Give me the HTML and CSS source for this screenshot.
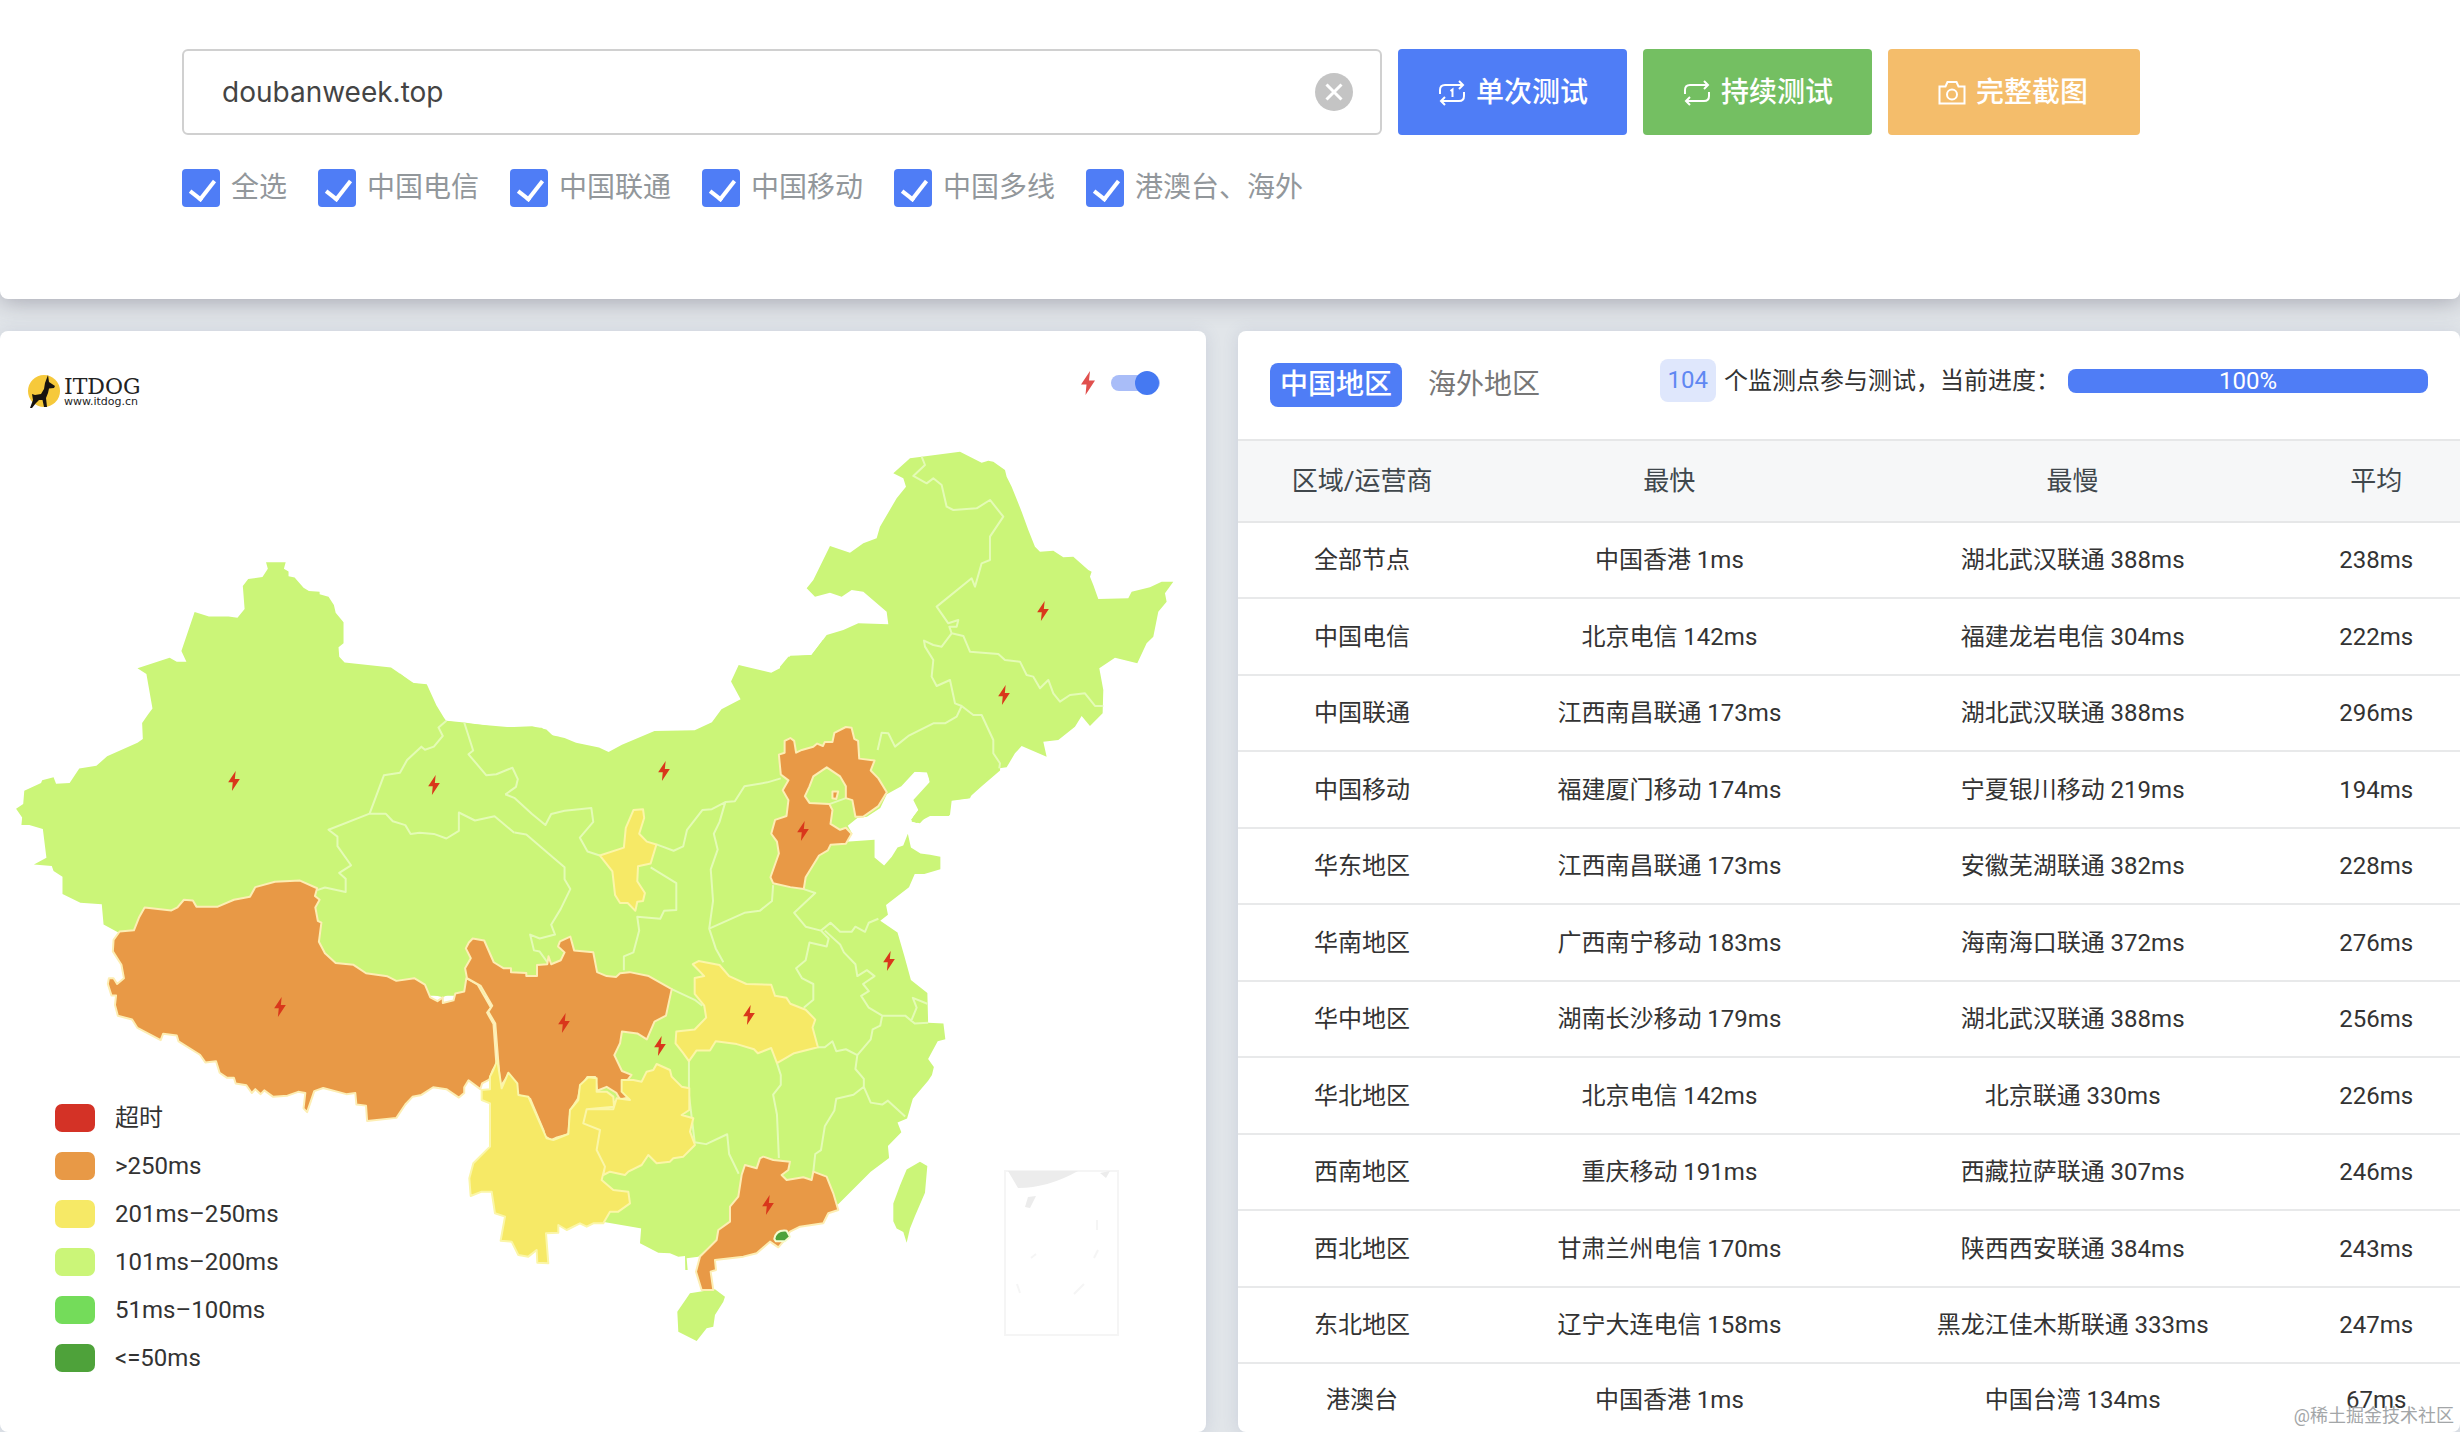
FILE: index.html
```html
<!DOCTYPE html>
<html lang="zh-CN">
<head>
<meta charset="utf-8">
<title>ITDOG 网站测速</title>
<link rel="stylesheet" href="styles.css">
</head>
<body>
<svg class="defs" aria-hidden="true">
  <symbol id="bolt" viewBox="0 0 14 24"><path d="M9 0 0 13.500H5.500L4.500 24 14 9.500H8Z"/></symbol>
</svg>
<section class="search-card">
  <form class="search-row">
    <div class="field">
      <input class="url" type="text" value="doubanweek.top" aria-label="网址">
      <button class="clear" type="button" aria-label="清除">
        <svg viewBox="0 0 38 38"><circle cx="19" cy="19" r="19"/><path d="M11.500 11.500 26.500 26.500M26.500 11.500 11.500 26.500"/></svg>
      </button>
    </div>
    <button class="btn btn-blue" type="button">
      <svg class="ico" viewBox="0 0 28 28"><path d="M2 15V11Q2 6 7 6H25M21 2 25 6 21 10M26 13V17Q26 22 21 22H3M7 18 3 22 7 26M12.500 12 14.500 10.500V18"/></svg>单次测试</button>
    <button class="btn btn-green" type="button">
      <svg class="ico" viewBox="0 0 28 28"><path d="M2 15V11Q2 6 7 6H25M21 2 25 6 21 10M26 13V17Q26 22 21 22H3M7 18 3 22 7 26"/></svg>持续测试</button>
    <button class="btn btn-orange" type="button">
      <svg class="ico" viewBox="0 0 28 28"><path d="M1.500 7.500H7.500L9.500 3H18.500L20.500 7.500H26.500V24.500H1.500Z"/><circle cx="14" cy="15.500" r="5"/></svg>完整截图</button>
  </form>
  <div class="checks">
    <label><input type="checkbox" checked>全选</label>
    <label><input type="checkbox" checked>中国电信</label>
    <label><input type="checkbox" checked>中国联通</label>
    <label><input type="checkbox" checked>中国移动</label>
    <label><input type="checkbox" checked>中国多线</label>
    <label><input type="checkbox" checked>港澳台、海外</label>
  </div>
</section>

<main class="panels">
<section class="panel map-panel">
  <svg class="map" viewBox="0 331 1206 1099" role="img" aria-label="中国各省延迟地图">
    <!-- mainland base and islands -->
    <g class="land">
      <path transform="translate(0 540) scale(.3571 .3827)" d="M745 58L800 58 795 75 808 82 808 95 825 98 850 125 865 133 895 135 895 142 920 148 935 170 940 190 962 215 962 270 948 280 950 305 965 320 1095 333 1160 375 1192 378 1200 400 1220 445 1250 472 1300 477 1400 490 1490 487 1530 495 1550 513 1568 515 1568 1100 1275 1180 1240 1195 900 1120 700 1000 330 1025 290 1005 285 952 225 948 175 925 175 880 150 865 145 852 95 848 130 830 120 755 82 745 60 745 62 725 45 702 65 690 68 655 115 635 118 628 150 620 157 637 195 635 222 597 270 590 300 565 385 530 400 520 398 478 415 455 427 440 410 350 385 335 475 308 495 318 522 318 508 290 545 188 585 200 640 200 665 203 685 180 680 120 695 102 735 97 750 75Z"/>
      <path transform="translate(400 640) scale(.3827 .3954)" d="M0 85L30 108 70 112 95 165 120 205 160 210 280 220 370 222 395 240 430 248 460 260 520 272 545 283 580 265 665 230 770 228 815 208 840 175 890 150 865 105 885 63 970 83 1005 65 1020 40 1075 38 1105 0 1568 0 1568 330 1520 370 1485 400 1440 405 1435 445 1385 445 1350 463 1335 455 1355 430 1350 400 1385 365 1380 335 1345 333 1310 370 1272 390 1255 425 1220 447 1195 450 1170 470 1182 490 1165 510 1240 505 1240 550 1265 570 1285 548 1300 525 1315 520 1327 490 1335 525 1360 540 1385 543 1412 548 1412 580 1370 592 1345 592 1330 625 1270 670 1275 695 1255 710 1300 740 1318 800 1335 860 1378 893 1380 968 1420 970 1425 1010 1405 1015 1380 1060 1395 1080 1390 1100 1380 1115 1340 1160 1325 1210 1300 1220 1310 1245 1275 1280 1278 1310 1230 1345 1145 1427 1000 1450 880 1520 700 1500 400 1450 400 900 0 900Z"/>
      <path transform="translate(780 430) scale(.3333)" d="M425 80L540 65 605 98 625 92 640 95 675 120 680 140 695 170 725 245 745 300 765 350 780 365 820 362 850 382 880 380 925 420 935 425 930 440 940 465 955 507 1045 505 1055 485 1110 472 1145 455 1180 455 1155 490 1160 515 1135 545 1120 620 1100 640 1072 700 1005 683 958 715 970 780 968 850 930 888 905 858 885 890 835 930 790 935 800 980 725 948 705 970 680 1012 658 1015 585 1070 570 1105 515 1112 510 1155 440 1158 420 1180 395 1175 400 1160 415 1140 400 1110 450 1055 440 1025 395 1025 355 1065 322 1090 240 985 0 940 0 710 25 680 95 675 140 615 190 600 235 580 325 583 320 545 250 485 215 480 185 500 150 488 105 500 80 475 100 450 150 348 210 368 250 340 290 325 300 290 350 205 378 170 370 145 340 130 390 85Z"/>
      <path transform="translate(440 1060) scale(.3333)" d="M485 355L515 335 560 350 700 290 770 260 850 225 900 340 870 480 830 540 775 590 740 595 743 630 736 630 735 588 715 590 690 580 655 578 600 550 605 485 540 475 570 430 565 395 520 390ZM750 700L825 688 855 710 850 725 825 765 820 800 800 805 770 843 715 815 712 755Z"/>
      <path transform="translate(740 800) scale(.3333 .357)" d="M540 1013L562 1025 555 1100 525 1165 510 1200 500 1240 490 1210 470 1200 460 1180 460 1130 480 1080 500 1035Z"/>
    </g>
    <!-- borders between provinces of the same colour -->
    <g class="border">
      <path transform="translate(0 540) scale(.3571 .3827)" d="M1250 472L1228 490 1240 512 1215 540 1190 548 1180 540 1140 575 1120 608 1075 615 1035 715 920 757 945 775 945 800 983 850 950 870 968 885 968 920 910 908 888 915M1035 715L1080 715 1100 735 1135 745 1150 768 1175 765 1215 768 1250 780 1285 760 1285 712 1330 733 1385 722 1440 765M1300 477L1325 550 1312 560 1362 615 1390 612 1435 595 1450 625 1445 645 1415 665"/>
      <path transform="translate(400 640) scale(.3827 .3954)" d="M299 487L330 492 400 550 430 575 430 605 445 630 420 680 395 720 405 745 365 755 340 745 350 785 365 788 385 815M275 390L300 400 345 440 380 468 395 440 430 432 500 425 505 460 470 500 490 535 522 545M670 517L715 533 740 522 750 480 790 430 815 428 850 410 875 408 900 370 960 360 995 350M850 410L835 460 820 490 830 530 812 580 818 660 808 730 825 780 845 815M808 730L900 690 940 685 972 660 975 620M655 575L722 615 722 683 690 685 680 705 620 700 625 735 610 790 585 800 585 835M1055 630L1085 640 1030 690 1060 725 1100 735 1125 715 1150 738 1180 738 1190 725 1215 738 1225 715 1250 705M1110 735L1150 770 1160 790 1190 820 1195 850 1220 835 1240 850 1210 870 1225 888 1205 900 1225 930 1260 950 1320 950 1345 970 1380 968M1335 965L1350 930 1340 905 1378 920M1100 735L1120 755 1115 775 1070 765 1060 810 1035 830 1050 855 1080 870 1080 910 1055 930M1092 1030L1110 1030 1130 1015 1140 1040 1165 1035 1195 1050 1230 1010 1235 985 1255 975 1260 950M1195 1050L1190 1085 1212 1110 1212 1130 1230 1170 1260 1175 1275 1165 1320 1205M1212 1130L1185 1150 1140 1160 1135 1190 1110 1230 1100 1290 1085 1300 1080 1345M985 1070L995 1100 995 1125 975 1150 985 1200 990 1310M755 1065L755 1150 770 1270 800 1275 855 1250 860 1300 885 1350M710 883L770 910 790 925M1165 400L1122 415"/>
      <path transform="translate(780 430) scale(.3333)" d="M425 80L435 105 400 138 440 160 460 145 485 165 500 230 520 240 590 235 630 210 670 260 630 320 630 390 605 400 585 470 575 445 470 530 505 580 535 570 530 590 508 590 515 610 550 618 570 665 655 672 675 690 720 695 740 735 760 740 780 775 805 750 820 790 840 815 870 795 915 790 945 828 970 828M515 610L485 650 460 645 432 632 435 650 460 690 455 740 470 768 510 750 525 820 545 828 580 855 605 855 640 930 640 970 660 1000 658 1015M545 828L530 860 495 880 460 880 385 918 345 950 325 910 305 908 293 960"/>
    </g>
    <!-- provinces above 250 ms -->
    <g class="slow">
      <path transform="translate(0 540) scale(.3571 .3827)" d="M405 960L480 968 497 960 515 940 540 942 550 958 610 958 655 940 700 932 715 907 770 893 840 890 888 910 882 930 895 940 883 960 890 995 900 1000 893 1050 910 1080 940 1105 990 1110 1025 1132 1085 1140 1110 1152 1160 1145 1190 1162 1205 1195 1225 1205 1240 1195 1240 1210 1270 1203 1275 1185 1300 1180 1306 1145 1338 1162 1375 1222 1364 1235 1382 1265 1390 1370 1380 1385 1370 1410 1350 1420 1345 1435 1312 1412 1300 1430 1300 1445 1285 1457 1250 1435 1213 1430 1180 1450 1155 1455 1135 1475 1110 1510 1028 1518 1025 1478 998 1475 995 1445 970 1448 905 1432 880 1440 860 1495 850 1485 855 1445 835 1442 805 1452 765 1455 740 1438 730 1448 715 1435 705 1445 690 1425 660 1420 655 1405 635 1405 615 1392 605 1362 575 1365 560 1345 500 1310 495 1295 457 1290 450 1307 385 1275 370 1253 330 1243 322 1215 325 1190 312 1190 302 1160 305 1145 318 1145 328 1160 347 1145 340 1110 316 1075 318 1045 335 1023 375 1020 390 985Z"/>
      <path transform="translate(400 640) scale(.3827 .3954)" d="M175 855L170 830 185 805 172 780 180 765 190 755 220 760 245 815 270 830 290 830 290 840 330 842 330 850 358 850 358 822 385 820 388 800 395 820 420 810 430 790 413 775 418 762 445 750 455 785 505 790 515 840 540 850 565 852 575 843 600 840 650 850 710 883 695 950 665 965 645 1010 620 995 580 990 575 1020 560 1050 580 1090 605 1100 585 1125 605 1155 575 1162 565 1145 540 1130 515 1140 510 1105 490 1105 470 1135 465 1160 445 1190 440 1250 410 1258 395 1265 378 1255 375 1240 340 1160 305 1150 285 1098 262 1130 249 970 231 940 241 925 211 875ZM1020 248L1030 255 1035 285 1050 278 1080 270 1090 262 1105 268 1110 258 1130 258 1135 235 1165 220 1180 222 1187 250 1197 255 1200 300 1240 305 1230 330 1250 350 1272 385 1250 420 1210 447 1190 447 1182 405 1165 400 1165 370 1150 345 1115 322 1080 345 1070 370 1058 395 1070 412 1122 415 1130 430 1125 465 1150 480 1165 475 1180 490 1165 515 1125 518 1118 532 1095 545 1060 600 1055 630 1020 625 975 615 968 600 990 540 985 510 970 490 980 455 1010 445 1015 405 1000 380 1015 355 995 340 990 290 1005 285 1005 255ZM1130 383H1145L1140 402 1130 400Z"/>
      <path transform="translate(440 1060) scale(.3333)" d="M970 290L1000 300 1050 305 1045 330 1025 345 1040 360 1090 352 1115 360 1120 335 1160 350 1180 400 1195 450 1165 460 1150 490 1080 500 1050 515 1030 545 1015 562 990 545 950 580 910 590 825 600 828 630 812 635 820 690 785 690 768 635 780 590 830 540 835 510 870 485 870 440 895 410 905 345 915 315 950 325 960 295Z"/>
    </g>
    <!-- 201 to 250 ms -->
    <g class="mid">
      <path transform="translate(440 1060) scale(.3333)" d="M160 30L172 0 185 85 205 38 232 70 235 105 265 110 320 235 340 240 385 222 390 150 415 120 420 75 445 52 470 55 470 95 500 95 520 110 522 140 440 148 430 190 480 210 470 270 495 320 485 360 520 390 565 395 570 430 535 455 510 455 490 490 460 490 440 500 420 490 380 510 355 495 355 518 318 520 325 610 292 608 290 570 265 590 235 585 215 545 182 542 195 470 165 460 155 395 125 395 92 408 88 355 100 310 150 260 150 130 125 120 125 90 150 88 150 50ZM440 148L520 148 530 115 570 120 545 95 545 60 580 60 605 65 620 35 640 30 650 12 690 30 695 50 725 80 748 85 748 150 725 165 760 175 750 215 765 255 730 290 700 295 690 305 650 310 625 285 605 315 565 335 555 345 510 335 490 345 495 320 470 270 480 210 430 190Z"/>
      <path transform="translate(400 640) scale(.3827 .3954)" d="M765 820L780 812 835 822 860 850 905 870 970 872 980 900 1010 905 1020 920 1060 935 1085 960 1078 980 1092 1030 1030 1045 985 1070 970 1032 935 1045 925 1035 880 1022 825 1015 810 1038 775 1038 755 1065 740 1045 720 1020 722 990 770 985 800 955 795 925 770 895 770 855 795 850ZM522 545L585 525 590 475 610 430 635 428 638 450 625 490 645 510 670 517 655 565 622 572 620 610 640 640 635 660 620 662 615 685 595 665 575 665 562 645 555 585Z"/>
    </g>
    <path class="fast" transform="translate(440 1060) scale(.3333)" d="M1003 537Q1008 508 1040 512L1050 530 1035 544 1008 544Z"/>
    <!-- South China Sea inset -->
    <rect class="inset" x="1005" y="1171" width="113" height="164"/>
    <path class="inset-fill" d="M1008 1171H1078Q1048 1188 1018 1188ZM1028 1197 1036 1196 1030 1208 1025 1207ZM1100 1173 1110 1171 1106 1178Z"/>
    <path class="inset" d="M1097 1220V1230M1098 1250 1094 1258M1017 1284 1020 1293M1084 1284 1074 1294M1031 1258 1036 1254"/>
    <g class="bolts">
      <use href="#bolt" x="1037" y="601" width="12" height="20"/>
      <use href="#bolt" x="998" y="685" width="12" height="20"/>
      <use href="#bolt" x="658" y="761" width="12" height="20"/>
      <use href="#bolt" x="428" y="775" width="12" height="20"/>
      <use href="#bolt" x="228" y="771" width="12" height="20"/>
      <use href="#bolt" x="274" y="997" width="12" height="20"/>
      <use href="#bolt" x="558" y="1013" width="12" height="20"/>
      <use href="#bolt" x="654" y="1036" width="12" height="20"/>
      <use href="#bolt" x="743" y="1005" width="12" height="20"/>
      <use href="#bolt" x="797" y="821" width="12" height="20"/>
      <use href="#bolt" x="883" y="951" width="12" height="20"/>
      <use href="#bolt" x="762" y="1195" width="12" height="20"/>
    </g>
  </svg>
  <header class="map-head">
    <div class="logo">
      <svg viewBox="0 0 34 34"><circle cx="16" cy="17" r="16" fill="#f6c93b"/><path fill="#17130f" d="M20 1 21 8 27 12 26 14 21 14.500 20 19 18 24 19 33H16L14.500 26 11 26 8 29 4 34H2L5 26 4 20 7 21 13 20 16 15 17 9Z"/></svg>
      <div class="logo-text"><b>ITDOG</b><small>www.itdog.cn</small></div>
    </div>
    <label class="switch"><svg><use href="#bolt"/></svg><input type="checkbox" role="switch" aria-label="闪烁" checked></label>
  </header>
  <ul class="legend">
    <li><i class="c1"></i>超时</li>
    <li><i class="c2"></i>&gt;250ms</li>
    <li><i class="c3"></i>201ms–250ms</li>
    <li><i class="c4"></i>101ms–200ms</li>
    <li><i class="c5"></i>51ms–100ms</li>
    <li><i class="c6"></i>&lt;=50ms</li>
  </ul>
</section>

<section class="panel data-panel">
  <header class="data-head">
    <nav class="tabs"><button class="tab on" type="button">中国地区</button><button class="tab" type="button">海外地区</button></nav>
    <div class="status"><span class="count">104</span><span>个监测点参与测试，当前进度：</span><div class="bar" role="progressbar" aria-label="进度" aria-valuenow="100">100%</div></div>
  </header>
  <table>
    <colgroup><col class="w1"><col class="w2"><col class="w3"><col class="w4"></colgroup>
    <thead><tr><th>区域/运营商</th><th>最快</th><th>最慢</th><th>平均</th></tr></thead>
    <tbody>
      <tr><td>全部节点</td><td>中国香港 1ms</td><td>湖北武汉联通 388ms</td><td>238ms</td></tr>
      <tr><td>中国电信</td><td>北京电信 142ms</td><td>福建龙岩电信 304ms</td><td>222ms</td></tr>
      <tr><td>中国联通</td><td>江西南昌联通 173ms</td><td>湖北武汉联通 388ms</td><td>296ms</td></tr>
      <tr><td>中国移动</td><td>福建厦门移动 174ms</td><td>宁夏银川移动 219ms</td><td>194ms</td></tr>
      <tr><td>华东地区</td><td>江西南昌联通 173ms</td><td>安徽芜湖联通 382ms</td><td>228ms</td></tr>
      <tr><td>华南地区</td><td>广西南宁移动 183ms</td><td>海南海口联通 372ms</td><td>276ms</td></tr>
      <tr><td>华中地区</td><td>湖南长沙移动 179ms</td><td>湖北武汉联通 388ms</td><td>256ms</td></tr>
      <tr><td>华北地区</td><td>北京电信 142ms</td><td>北京联通 330ms</td><td>226ms</td></tr>
      <tr><td>西南地区</td><td>重庆移动 191ms</td><td>西藏拉萨联通 307ms</td><td>246ms</td></tr>
      <tr><td>西北地区</td><td>甘肃兰州电信 170ms</td><td>陕西西安联通 384ms</td><td>243ms</td></tr>
      <tr><td>东北地区</td><td>辽宁大连电信 158ms</td><td>黑龙江佳木斯联通 333ms</td><td>247ms</td></tr>
      <tr><td>港澳台</td><td>中国香港 1ms</td><td>中国台湾 134ms</td><td>67ms</td></tr>
    </tbody>
  </table>
</section>
</main>
<div class="watermark">@稀土掘金技术社区</div>
</body>
</html>
```
FILE: styles.css
```css
* { box-sizing: border-box; }
body {
  position: relative;
  margin: 0;
  min-height: 100vh;
  background: #e1e5e9;
  color: #333;
  font: 24px/36px Roboto, "Noto Sans CJK SC", sans-serif;
}
button, input { font: inherit; margin: 0; }
button { border: 0; padding: 0; cursor: pointer; }
.defs { display: none; }

.search-card {
  background: #fff;
  border-radius: 0 0 8px 8px;
  padding: 49px 182px 92px;
  box-shadow: 0 2px 24px rgba(70, 65, 85, .4);
}
.search-row { display: flex; gap: 16px; }
.field { position: relative; flex: 0 1 1200px; }
.url {
  width: 100%;
  height: 86px;
  padding: 0 90px 0 38px;
  border: 2px solid #d0d0d0;
  border-radius: 6px;
  background: #fff;
  color: #444;
  font-family: Inter, "Noto Sans CJK SC", sans-serif;
  font-size: 28px;
  outline: 0;
}
.clear {
  position: absolute;
  right: 29px;
  top: 24px;
  width: 38px;
  height: 38px;
  background: none;
}
.clear svg { display: block; }
.clear circle { fill: #c4c4c4; }
.clear path { stroke: #fff; stroke-width: 3; }
.btn {
  display: flex;
  align-items: center;
  gap: 10px;
  height: 86px;
  padding: 2px 39px 0 40px;
  border-radius: 4px;
  color: #fff;
  font-size: 28px;
  font-weight: 500;
  white-space: nowrap;
}
.btn-blue { background: #4f7df6; }
.btn-green { background: #74bf62; }
.btn-orange { background: #f4bd6b; padding: 2px 52px 0 50px; }
.ico { width: 28px; height: 28px; fill: none; stroke: #fff; stroke-width: 2; }
.checks { display: flex; gap: 31px; margin-top: 34px; }
.checks label {
  display: flex;
  align-items: center;
  gap: 11px;
  height: 38px;
  color: #92979b;
  font-size: 28px;
  line-height: 40px;
}
.checks input {
  appearance: none;
  width: 38px;
  height: 38px;
  border-radius: 4px;
  background: #4f7df6;
}
.checks input::after {
  content: "";
  display: block;
  width: 11px;
  height: 21px;
  margin: 6px 0 0 13px;
  border: solid #fff;
  border-width: 0 4px 4px 0;
  transform: rotate(38deg);
}

.panels {
  display: grid;
  grid-template-columns: 1206fr 1222fr;
  gap: 32px;
  margin-top: 32px;
}
.panel {
  background: #fff;
  border-radius: 8px;
  box-shadow: 0 1px 16px rgba(90, 100, 150, .16);
}
.map-panel { display: grid; }
.map-panel > * { grid-area: 1 / 1; }
.map { display: block; width: 100%; align-self: start; }
.map path { vector-effect: non-scaling-stroke; stroke-linejoin: round; }
.land { fill: #cbf578; }
.border { fill: none; stroke: #e4fbb6; stroke-width: 2; }
.slow { fill: #e89946; stroke: #fdeeb4; stroke-width: 2; }
.mid { fill: #f6e966; stroke: #fbf6a8; stroke-width: 2; }
.fast { fill: #4ea23a; stroke: #f6fbd0; stroke-width: 2; }
.inset { fill: none; stroke: #f5f5f5; stroke-width: 2; }
.inset-fill { fill: #ececec; }
.bolts { fill: #d9371b; }

.map-head {
  display: flex;
  justify-content: space-between;
  align-self: start;
  padding: 38px 46px 0 28px;
}
.logo { display: flex; align-items: center; gap: 2px; margin-top: 4px; }
.logo svg { width: 34px; height: 36px; }
.logo-text { padding-top: 2px; color: #222; }
.logo b { display: block; font: 22px/20px "DejaVu Serif", serif; }
.logo small { display: block; font: 11px/10px "DejaVu Sans", sans-serif; }
.switch { display: flex; align-items: center; gap: 16px; height: 28px; }
.switch svg { width: 14px; height: 26px; fill: #e0504e; }
.switch input {
  appearance: none;
  width: 49px;
  height: 16px;
  border-radius: 8px;
  background: #a9bdf8;
}
.switch input::after {
  content: "";
  display: block;
  width: 24px;
  height: 24px;
  margin: -4px 0 0 24px;
  border-radius: 50%;
  background: #4579f2;
}
.legend {
  align-self: end;
  justify-self: start;
  display: grid;
  gap: 12px;
  margin: 0;
  padding: 0 0 56px 55px;
  list-style: none;
}
.legend li { display: flex; align-items: center; gap: 20px; }
.legend i { width: 40px; height: 28px; border-radius: 7px; }
.c1 { background: #d43226; }
.c2 { background: #e89946; }
.c3 { background: #f6e966; }
.c4 { background: #cbf578; }
.c5 { background: #74dc5a; }
.c6 { background: #4ea23a; }

.data-head {
  display: flex;
  justify-content: space-between;
  align-items: flex-start;
  height: 110px;
  padding: 28px 32px 0;
  border-bottom: 2px solid #e6e7e8;
}
.tabs { display: flex; gap: 16px; margin-top: 4px; }
.tab {
  height: 44px;
  padding: 0 10px;
  border-radius: 8px;
  background: none;
  color: #777;
  font-size: 28px;
  line-height: 44px;
}
.tab.on { background: #4f7df6; color: #fff; font-weight: 500; }
.status { display: flex; align-items: center; }
.count {
  height: 43px;
  margin-right: 8px;
  padding: 0 8px;
  border-radius: 8px;
  background: #dfe7fc;
  color: #5f88f2;
  line-height: 43px;
}
.bar {
  width: 360px;
  height: 24px;
  margin-left: 8px;
  border-radius: 8px;
  background: #4f7df6;
  color: #fff;
  line-height: 24px;
  text-align: center;
}
table { width: 100%; border-collapse: collapse; table-layout: fixed; text-align: center; }
.w1 { width: 20.3%; }
.w2 { width: 30%; }
.w3 { width: 36%; }
th {
  height: 81px;
  padding: 0;
  border-bottom: 2px solid #e6e7e8;
  background: #f6f7f8;
  color: #40474c;
  font-size: 26px;
  font-weight: 400;
}
td { height: 76px; padding: 0; border-bottom: 2px solid #e8e9ea; white-space: nowrap; }
tr:nth-child(4n) td, tr:nth-child(4n + 2) td { height: 77px; }
tbody tr:last-child td { height: 69px; padding-top: 4px; border-bottom: 0; }
.watermark {
  position: absolute;
  right: 6px;
  bottom: 0;
  color: #a3a6a8;
  font-size: 18px;
  line-height: 32px;
  text-shadow: 0 0 2px #fff;
}
```
